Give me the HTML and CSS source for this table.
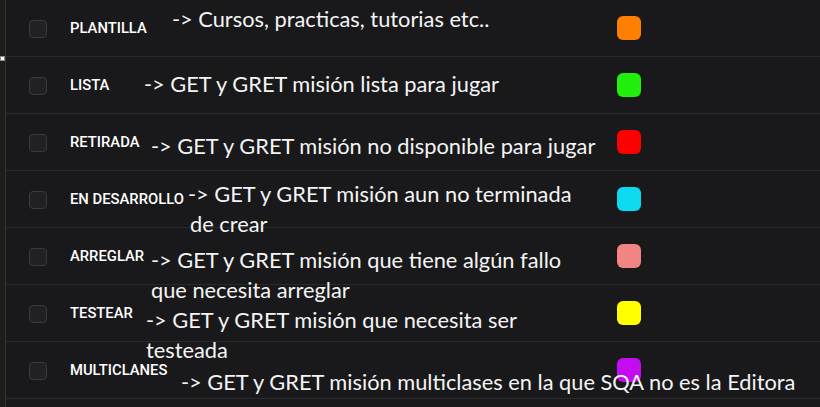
FILE: index.html
```html
<!DOCTYPE html>
<html lang="es">

<head>
    <meta charset="UTF-8">
    <meta name="viewport" content="width=device-width, initial-scale=1.0">
    <title>Estados de misión</title>
    <link rel="stylesheet" href="styles.css">
</head>

<body>
    <div class="frame">
        <div class="edge"><span class="handle"></span></div>

        <ul class="status-list">
            <li class="status-row">
                <span class="check"></span>
                <span class="label">PLANTILLA</span>
                <span class="swatch swatch-orange"></span>
                <span class="note note-plantilla">-&gt; Cursos, practicas, tutorias etc..</span>
            </li>
            <li class="status-row">
                <span class="check"></span>
                <span class="label">LISTA</span>
                <span class="swatch swatch-green"></span>
                <span class="note note-lista">-&gt; GET y GRET misión lista para jugar</span>
            </li>
            <li class="status-row">
                <span class="check"></span>
                <span class="label">RETIRADA</span>
                <span class="swatch swatch-red"></span>
                <span class="note note-retirada">-&gt; GET y GRET misión no disponible para jugar</span>
            </li>
            <li class="status-row">
                <span class="check"></span>
                <span class="label">EN DESARROLLO</span>
                <span class="swatch swatch-cyan"></span>
                <span class="note note-desarrollo">-&gt; GET y GRET misión aun no terminada<br><span class="indent">de crear</span></span>
            </li>
            <li class="status-row">
                <span class="check"></span>
                <span class="label">ARREGLAR</span>
                <span class="swatch swatch-pink"></span>
                <span class="note note-arreglar">-&gt; GET y GRET misión que tiene algún fallo<br>que necesita arreglar</span>
            </li>
            <li class="status-row">
                <span class="check"></span>
                <span class="label">TESTEAR</span>
                <span class="swatch swatch-yellow"></span>
                <span class="note note-testear">-&gt; GET y GRET misión que necesita ser<br>testeada</span>
            </li>
            <li class="status-row">
                <span class="check"></span>
                <span class="label">MULTICLANES</span>
                <span class="swatch swatch-purple"></span>
                <span class="note note-multiclanes">-&gt; GET y GRET misión multiclases en la que SQA no es la Editora</span>
            </li>
        </ul>
    </div>
</body>

</html>
```

FILE: styles.css
```css
body {
    margin: 0;
    background-color: #19191b;
    color: #ffffff;
    font-family: Roboto, "Liberation Sans", sans-serif;
    overflow: hidden;
}

.frame {
    display: flex;
    height: 407px;
    overflow: hidden;
}

/* left panel edge with the resize handle */
.edge {
    position: relative;
    flex: none;
    width: 5px;
    background-color: #1c1e1a;
    border-right: 1px solid #34352f;
}

.handle {
    position: absolute;
    top: 56px;
    left: 0;
    width: 3px;
    height: 3px;
    background-color: #ffffff;
    border: 1px solid #8a8a8a;
}

.status-list {
    flex: 1;
    list-style: none;
    margin: 0;
    padding: 0;
}

.status-row {
    position: relative;
    display: grid;
    grid-template-columns: 18px 1fr 24px;
    column-gap: 23px;
    align-items: center;
    height: 56px;
    padding: 0 179px 0 23px;
    border-bottom: 1px solid #2a2a2c;
}

.check {
    box-sizing: border-box;
    width: 18px;
    height: 18px;
    margin-top: 2px;
    border: 1.5px solid #3a3a3d;
    border-radius: 4px;
    background-color: #212123;
}

.label {
    font-size: 14.8px;
    font-weight: 500;
    white-space: nowrap;
}

.swatch {
    width: 24px;
    height: 24px;
    border-radius: 6px;
}

.swatch-orange { background-color: #ff8000; }
.swatch-green { background-color: #22ef0c; }
.swatch-red { background-color: #ff0000; }
.swatch-cyan { background-color: #0dd9f1; }
.swatch-pink { background-color: #f28584; }
.swatch-yellow { background-color: #ffff00; }
.swatch-purple { background-color: #c30cf2; }

/* hand-written notes laid over the list */
.note {
    position: absolute;
    z-index: 1;
    font-family: Lato, "Open Sans", sans-serif;
    font-size: 21.8px;
    line-height: 30px;
    white-space: nowrap;
    color: #f4f4f4;
}

.note .indent {
    padding-left: 2px;
}

.note-plantilla { left: 166px; top: 4px; }
.note-lista { left: 138px; top: 12px; }
.note-retirada { left: 145px; top: 17px; }
.note-desarrollo { left: 182px; top: 8px; }
.note-arreglar { left: 145px; top: 17px; }
.note-testear { left: 140px; top: 20px; }
.note-multiclanes { left: 175px; top: 25px; }
```
